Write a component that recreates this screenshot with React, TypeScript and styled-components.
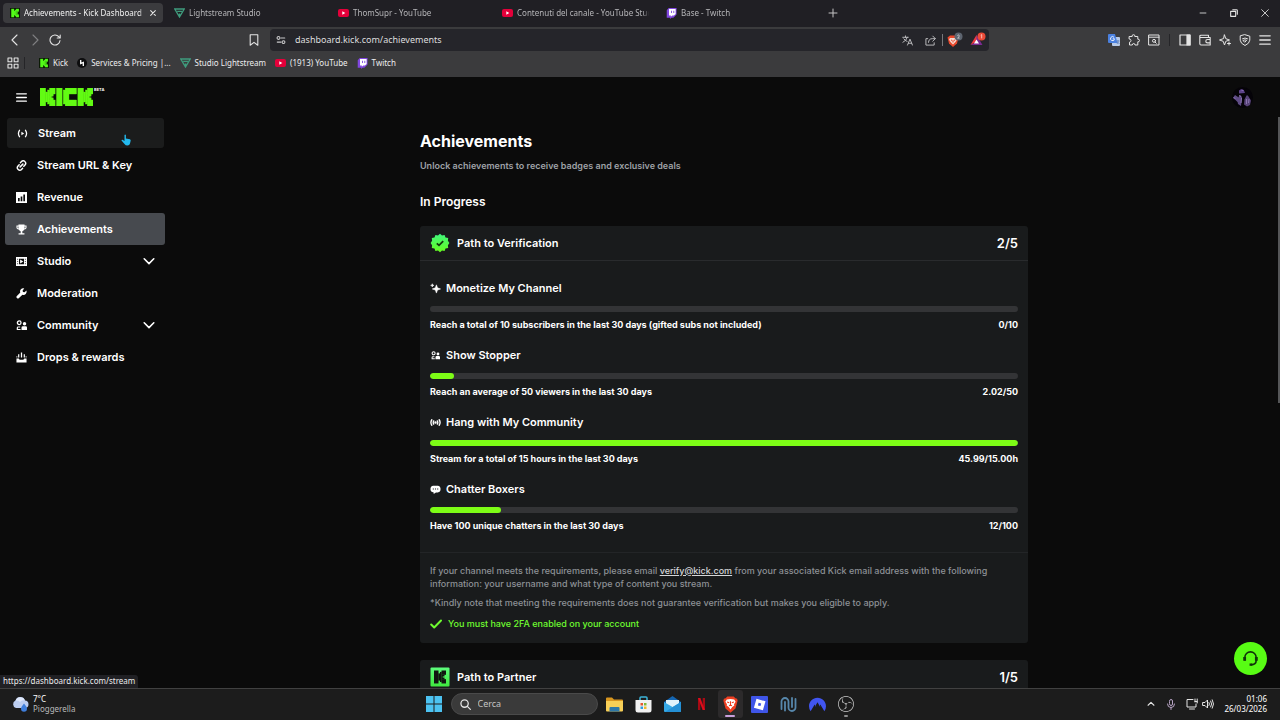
import React from "react";
import styled, { createGlobalStyle, css } from "styled-components";
import { SiNordvpn, SiObsstudio } from "react-icons/si";

const UI = `"Noto Sans", "Open Sans", sans-serif`;
const GREEN = "#7dfc16";

const Global = createGlobalStyle`
  *, *::before, *::after { box-sizing: border-box; }
  body { margin: 0; background: #0b0b0b; color: #fff; font-family: Inter, sans-serif; overflow: hidden; }
  button, input { font: inherit; color: inherit; border: 0; padding: 0; margin: 0; background: none; }
  h1, h2, h3, p, ul { margin: 0; padding: 0; }
  ul { list-style: none; }
  a { color: inherit; text-decoration: none; }
  svg { display: block; flex: none; }
`;

const Screen = styled.div`
  display: flex;
  flex-direction: column;
  height: 100vh;
`;

/* ---------- browser ---------- */

const TabStrip = styled.div`
  display: flex;
  align-items: center;
  height: 27px;
  padding: 0 0 1px 3px;
  background: #201f24;
  font: 8px/12px ${UI};
`;

const Tab = styled.button<{ $active?: boolean }>`
  display: flex;
  align-items: center;
  gap: 4px;
  width: 160px;
  height: 20px;
  margin-right: 4px;
  padding: 0 6px 0 7px;
  border-radius: 4px;
  color: ${(p) => (p.$active ? "#f1f1f1" : "#b5b5b8")};
  background: ${(p) => (p.$active ? "#3b3b3e" : "transparent")};
  text-align: left;
`;

const TabLabel = styled.span`
  flex: 1;
  overflow: hidden;
  white-space: nowrap;
  mask-image: linear-gradient(90deg, #000 calc(100% - 6px), transparent);
`;

const NewTab = styled.button`
  display: grid;
  place-items: center;
  width: 20px;
  height: 20px;
`;

const WindowButtons = styled.div`
  display: flex;
  margin-left: auto;
`;

const WindowButton = styled.button`
  display: grid;
  place-items: center;
  width: 31px;
  height: 26px;
`;

const Toolbar = styled.div`
  display: grid;
  grid-template-columns: 264px 1fr 291px;
  align-items: center;
  height: 26px;
  background: #3b3b3d;
`;

const ToolGroup = styled.div<{ $end?: boolean }>`
  display: flex;
  align-items: center;
  ${(p) =>
    p.$end
      ? css`
          justify-content: flex-end;
          padding-right: 5px;
        `
      : css`
          padding-left: 5px;
        `}
`;

const Tool = styled.button<{ $push?: boolean }>`
  display: grid;
  place-items: center;
  width: 20px;
  height: 20px;
  margin-left: ${(p) => (p.$push ? "auto" : "0")};
`;

const Divider = styled.span<{ $light?: boolean }>`
  width: 1px;
  height: 12px;
  margin: ${(p) => (p.$light ? "0" : "0 5px")};
  background: ${(p) => (p.$light ? "#77777a" : "#252528")};
`;

const Address = styled.div`
  display: flex;
  align-items: center;
  gap: 9px;
  height: 22px;
  margin-left: 6px;
  padding-left: 6px;
  border-radius: 4px;
  background: #25252a;
  font: 9px/14px ${UI};
`;

const AddressInput = styled.input`
  flex: 1;
  min-width: 0;
  color: #dededf;
  outline: 0;
`;

const AddressTools = styled.div`
  display: flex;
  align-items: center;
`;

const AddressTool = styled.button`
  display: grid;
  place-items: center;
  width: 23px;
  height: 20px;
`;

const Bookmarks = styled.nav`
  display: flex;
  align-items: center;
  height: 24px;
  padding: 0 7px 4px;
  background: #3b3b3d;
  color: #ededee;
  font: 8px/12px ${UI};
`;

const BookmarkList = styled.div`
  display: flex;
  align-items: center;
  gap: 9px;
  margin-left: 9px;
`;

const Bookmark = styled.a`
  display: flex;
  align-items: center;
  gap: 4px;
  white-space: nowrap;
`;

/* ---------- page ---------- */

const Page = styled.div`
  position: relative;
  display: flex;
  flex: 1;
  flex-direction: column;
  min-height: 0;
  overflow: hidden;
`;

const PageHeader = styled.header`
  display: flex;
  align-items: center;
  gap: 13px;
  flex: none;
  height: 40px;
  padding: 0 27px 0 16px;
`;

const IconButton = styled.button`
  display: grid;
  place-items: center;
`;

const Brand = styled.a`
  display: flex;
  align-items: flex-start;
  gap: 1px;
`;

const Beta = styled.span`
  font-size: 4px;
  line-height: 4px;
  font-weight: 700;
`;

const AvatarButton = styled.button`
  margin-left: auto;
`;

const Body = styled.div`
  display: flex;
  flex: 1;
  min-height: 0;
`;

const Sidebar = styled.nav`
  flex: none;
  width: 170px;
  padding-left: 5px;
`;

const navRow = css<{ $state?: "hover" | "active" }>`
  display: flex;
  align-items: center;
  gap: 10px;
  width: 160px;
  height: 32px;
  padding: 0 10px 0 11px;
  border-radius: 3px;
  font-size: 11px;
  line-height: 16px;
  font-weight: 600;
  text-align: left;
  ${(p) => p.$state === "active" && "background: #474a4f;"}
  ${(p) =>
    p.$state === "hover" &&
    css`
      width: 157px;
      height: 30px;
      margin: 1px 2px;
      padding: 0 10px;
      background: #1b1c1c;
    `}
`;

const NavLink = styled.a<{ $state?: "hover" | "active" }>`
  ${navRow}
`;

const NavToggle = styled.button<{ $state?: "hover" | "active" }>`
  ${navRow}
`;

const NavLabel = styled.span`
  flex: 1;
`;

const Main = styled.main`
  flex: 1;
  min-width: 0;
  overflow: hidden;
`;

const Content = styled.div`
  max-width: 608px;
  margin: 0 auto;
  padding-top: 12px;
`;

const Title = styled.h1`
  font-size: 16px;
  line-height: 24px;
  font-weight: 700;
`;

const Subtitle = styled.p`
  margin-top: 5px;
  color: #9ea1a6;
  font-size: 9px;
  line-height: 15px;
  font-weight: 600;
`;

const SectionTitle = styled.h2`
  margin: 21px 0 16px;
  font-size: 12px;
  line-height: 16px;
  font-weight: 600;
`;

const Card = styled.section`
  margin-bottom: 17px;
  border-radius: 3px;
  background: #191b1c;
`;

const CardHeader = styled.header`
  display: flex;
  align-items: center;
  gap: 7px;
  height: 35px;
  padding: 0 10px;
  border-bottom: 1px solid #292b2d;
`;

const CardTitle = styled.h3`
  flex: 1;
  font-size: 11px;
  line-height: 16px;
  font-weight: 600;
`;

const CardCount = styled.span`
  font-size: 13px;
  line-height: 16px;
  font-weight: 600;
`;

const Goals = styled.ul`
  display: flex;
  flex-direction: column;
  gap: 15px;
  padding: 19px 10px;
`;

const GoalTitle = styled.div`
  display: flex;
  align-items: center;
  gap: 5px;
  font-size: 11px;
  line-height: 16px;
  font-weight: 600;
`;

const Track = styled.div`
  height: 6px;
  margin: 10px 0 6px;
  overflow: hidden;
  border-radius: 3px;
  background: #333436;
`;

const Fill = styled.div`
  height: 100%;
  border-radius: 3px;
  background: ${GREEN};
`;

const GoalInfo = styled.div`
  display: flex;
  justify-content: space-between;
  font-size: 9px;
  line-height: 14px;
  font-weight: 700;
`;

const Notes = styled.div`
  display: flex;
  flex-direction: column;
  gap: 6px;
  padding: 11px 10px 13px;
  border-top: 1px solid #232527;
  color: #8d9196;
  font-size: 9px;
  line-height: 13px;
  font-weight: 500;
`;

const MailLink = styled.a`
  color: #d5d7d9;
  text-decoration: underline;
`;

const Requirement = styled.p`
  display: flex;
  align-items: center;
  gap: 6px;
  margin-top: 2px;
  color: #6ffb30;
`;

const ScrollTrack = styled.div`
  width: 2px;
`;

const ScrollThumb = styled.div`
  height: 50%;
  background: #555658;
`;

const HelpButton = styled.button`
  position: absolute;
  right: 13px;
  bottom: 13px;
  display: grid;
  place-items: center;
  width: 33px;
  height: 33px;
  border-radius: 50%;
  background: #58fc14;
`;

const StatusBubble = styled.div`
  position: absolute;
  left: 0;
  bottom: 0;
  padding: 0 3px 1px;
  border-radius: 0 3px 0 0;
  background: #202024;
  color: #ececec;
  font: 8px/12px ${UI};
`;

const Pointer = styled.svg`
  position: absolute;
  left: 121px;
  top: 57px;
`;

/* ---------- taskbar ---------- */

const Taskbar = styled.footer`
  display: grid;
  grid-template-columns: 1fr auto 1fr;
  align-items: center;
  flex: none;
  height: 32px;
  padding-bottom: 1px;
  border-top: 1px solid #414141;
  background: #1c1c1c;
  font: 8px/10px ${UI};
`;

const Weather = styled.button`
  display: flex;
  align-items: center;
  justify-self: start;
  gap: 4px;
  padding-left: 12px;
  text-align: left;
`;

const Stack = styled.span<{ $end?: boolean }>`
  display: flex;
  flex-direction: column;
  text-align: ${(p) => (p.$end ? "right" : "left")};
`;

const Dim = styled.span`
  color: #b9b9b9;
`;

const Apps = styled.div`
  display: flex;
  align-items: center;
`;

const AppButton = styled.button<{ $active?: boolean }>`
  position: relative;
  display: grid;
  place-items: center;
  width: 25px;
  height: 28px;
  margin: 0 2px;
  border-radius: 3px;
  background: ${(p) => (p.$active ? "#2c2a2b" : "transparent")};
`;

const RunMark = styled.span<{ $active?: boolean }>`
  position: absolute;
  bottom: 1px;
  width: ${(p) => (p.$active ? "10px" : "4px")};
  height: 2px;
  border-radius: 1px;
  background: ${(p) => (p.$active ? "#c9a0dc" : "#8d8d8d")};
`;

const SearchBox = styled.label`
  display: flex;
  align-items: center;
  gap: 7px;
  width: 147px;
  height: 22px;
  margin: 0 2px;
  padding: 0 8px;
  border: 1px solid #4a4a4a;
  border-radius: 11px;
  background: #3a3a3a;
  font: 9px/14px ${UI};
`;

const SearchInput = styled.input`
  flex: 1;
  min-width: 0;
  outline: 0;
  &::placeholder {
    color: #c4c4c4;
    opacity: 1;
  }
`;

const Tray = styled.div`
  display: flex;
  align-items: center;
  justify-content: flex-end;
  gap: 9px;
  padding-right: 13px;
`;

const TrayPair = styled.button`
  display: flex;
  align-items: center;
  gap: 4px;
`;

const Clock = styled.button`
  margin-left: 1px;
`;

/* ---------- drawings ---------- */

type IconProps = { size?: number; color?: string; width?: number; children: React.ReactNode };

const Line = ({ size = 12, color = "#e4e4e4", width = 1, children }: IconProps) => (
  <svg width={size} height={size} viewBox="0 0 12 12" fill="none" stroke={color} strokeWidth={width} strokeLinecap="round" strokeLinejoin="round" aria-hidden>
    {children}
  </svg>
);

const Solid = ({ size = 11, color = "#fff", children }: IconProps) => (
  <svg width={size} height={size} viewBox="0 0 12 12" fill={color} aria-hidden>
    {children}
  </svg>
);

/* The K mark as blocks on an 8 by 9 grid */
const KBlocks = ({ x = 0 }: { x?: number }) => (
  <g transform={`translate(${x} 0)`}>
    <rect width="3" height="9" />
    <rect x="2.9" y="2" width="1.2" height="5" />
    <rect x="4" y="1" width="1.1" height="7" />
    <rect x="5" width="3" height="3" />
    <rect x="5" y="2.9" width="2" height="1.2" />
    <rect x="5" y="4" width="1" height="1" />
    <rect x="5" y="4.9" width="2" height="1.2" />
    <rect x="5" y="6" width="3" height="3" />
  </g>
);

const KickLogo = () => (
  <svg
    width="53"
    height="18"
    viewBox="0 0 28 9"
    preserveAspectRatio="none"
    fill="#62fb13"
    stroke="#62fb13"
    strokeWidth=".2"
    role="img"
    aria-label="Kick"
  >
    <KBlocks />
    <rect x="8.7" width="3" height="9" />
    <rect x="13.3" width="6" height="3" />
    <rect x="12.3" y="1" width="3" height="7" />
    <rect x="13.3" y="6" width="6" height="3" />
    <KBlocks x={20} />
  </svg>
);

const KickFavicon = () => (
  <svg width="10" height="10" viewBox="0 0 12 12" aria-hidden>
    <rect width="12" height="12" fill="#0b1a05" />
    <g fill="#53fc18" transform="translate(1.5 1) scale(1.15 1.12)">
      <KBlocks />
    </g>
  </svg>
);

const PartnerBadge = () => (
  <svg width="20" height="20" viewBox="0 0 20 20" aria-hidden>
    <defs>
      <linearGradient id="partner" x1="0" y1="0" x2="0" y2="1">
        <stop offset="0" stopColor="#5dfc7c" />
        <stop offset="1" stopColor="#3fe83f" />
      </linearGradient>
    </defs>
    <rect x=".5" y=".5" width="19" height="19" rx="1" fill="url(#partner)" />
    <g fill="#101510" transform="translate(4 3.5) scale(1.5 1.44)">
      <KBlocks />
    </g>
  </svg>
);

const VerifiedBadge = () => (
  <svg width="20" height="20" viewBox="0 0 20 20" aria-hidden>
    <defs>
      <linearGradient id="verified" x1="0" y1="0" x2="0" y2="1">
        <stop offset="0" stopColor="#3ff77f" />
        <stop offset="1" stopColor="#66fb1c" />
      </linearGradient>
    </defs>
    <path
      fill="url(#verified)"
      d="M10 .8l2 1.8 2.6-.7.9 2.5 2.7.7-.3 2.7L19.4 10l-1.5 2.2.3 2.7-2.7.7-.9 2.5-2.6-.7-2 1.8-2-1.8-2.6.7-.9-2.5-2.7-.7.3-2.7L.6 10l1.5-2.2-.3-2.7 2.7-.7.9-2.5 2.6.7z"
    />
    <path d="M6.8 10.3l2.2 2 4.2-4.2" fill="none" stroke="#14380c" strokeWidth="1.8" />
  </svg>
);

const Lightstream = () => (
  <svg width="11" height="10" viewBox="0 0 11 10" fill="none" stroke="#3f9c7d" strokeWidth="1.3" aria-hidden>
    <path d="M.8 1h9.4L5.5 9zM3.2 3.4h4.7M5.5 8.5V5.5" />
  </svg>
);

const YouTube = () => (
  <svg width="11" height="8" viewBox="0 0 11 8" aria-hidden>
    <rect width="11" height="8" rx="2" fill="#e4003a" />
    <path d="M4.3 2.2v3.6L7.3 4z" fill="#fff" />
  </svg>
);

const TwitchMark = () => (
  <svg width="11" height="11" viewBox="0 0 12 12" aria-hidden>
    <path d="M3 0h8.5v7L8 10.5H6L4.5 12v-1.5H.8V2.5z" fill="#8147e0" />
    <path d="M3.3 1h7.2v5.5L8.6 8.2H6.8L5.3 9.6V8.2h-2z" fill="#fff" />
    <path d="M6 3v2.5M8.5 3v2.5" stroke="#8147e0" />
  </svg>
);

const ServicesMark = () => (
  <svg width="10" height="10" viewBox="0 0 10 10" aria-hidden>
    <circle cx="5" cy="5" r="5" fill="#0d0d0e" />
    <path d="M3.7 2v3.5l2.6-1V8" fill="none" stroke="#fff" strokeWidth="1.3" />
  </svg>
);

const BraveLion = ({ size = 12 }: { size?: number }) => (
  <svg width={size} height={size} viewBox="0 0 16 16" aria-hidden>
    <path d="M5 .5h6l1.6 1.7 1.6.3.5 2-.4 1.3-1.6 6L8 15.7l-4.7-3.9-1.6-6-.4-1.3.5-2 1.6-.3z" fill="#ee3f22" />
    <path d="M4.5 3.3L8 2.8l3.5.5 1.3 2.2-1.5 2.3.3 1.2-2 1.3L8 12.8l-1.6-2.5-2-1.3.3-1.2-1.5-2.3z" fill="#fff" />
    <path d="M4.8 5.6l2 .7M11.2 5.6l-2 .7M8 5v3.5M6.6 9.2L8 8.6l1.4.6" stroke="#ee3f22" strokeWidth="1" fill="none" />
  </svg>
);

const Shields = () => (
  <svg width="16" height="16" viewBox="0 0 16 16" aria-hidden>
    <g transform="translate(0 3)">
      <path d="M3 .5h6l2.5 2-1.5 6L6 12 2 8.5.5 2.5z" fill="#e9482c" />
      <path d="M3 3h6l1 1.5L8.5 7 6 9.5 3.5 7 2 4.5z" fill="#f6d9d0" />
      <path d="M4 5l1.5.6M8 5l-1.5.6M6 6v1.5" stroke="#e9482c" />
    </g>
    <circle cx="11.5" cy="4.5" r="4" fill="#5d6470" />
    <path d="M10.4 3.5q1.2-1 1.8 0t-1.6 2.6h2" fill="none" stroke="#d4d7db" strokeWidth=".8" />
  </svg>
);

const Rewards = () => (
  <svg width="16" height="16" viewBox="0 0 16 16" aria-hidden>
    <path d="M6.5 3l6 10h-12l3-1.5z" fill="#7a2a91" />
    <path d="M6.5 3L.5 13l6-3.5z" fill="#ec3a3f" />
    <path d="M6.5 7.5l2.5 4H4z" fill="#fff" />
    <circle cx="11.5" cy="4.5" r="4" fill="#ea4a37" />
    <path d="M10.8 3.2l.9-.6v3.8" fill="none" stroke="#ffd8d0" strokeWidth=".8" />
  </svg>
);

const GoogleTranslate = () => (
  <svg width="12" height="12" viewBox="0 0 12 12" aria-hidden>
    <rect x="4" y="3" width="8" height="9" rx="1" fill="#b9cbe8" />
    <path d="M1 0h6l2.5 9H1a1 1 0 01-1-1V1a1 1 0 011-1z" fill="#4a80df" />
    <path d="M6 3.3a2 2 0 10.5 1.5H4.7" fill="none" stroke="#e9f0fc" />
    <path d="M8.5 7h3M10 6v1q0 2-1 3M9.5 8l2 2" stroke="#5c7eb8" fill="none" strokeWidth=".8" />
  </svg>
);

const Avatar = () => (
  <svg width="21" height="21" viewBox="0 0 21 21" role="img" aria-label="Profile">
    <circle cx="10.5" cy="10.5" r="10.5" fill="#050308" />
    <path d="M7 3.5q3-3 5 0l1 2.5-6 .5z" fill="#5d4389" />
    <path d="M3 8l3 2 .5 6-3-3-2.5-2zM5 12l3-4 2 2-1 9-3-2z" fill="#5f4c85" />
    <path d="M14 9.5l1-1.5 1.5 1.5 2.5 4-1 4.5-3 1.5-3-2 .5-5z" fill="#584479" />
    <path d="M7.5 8l1 2M9.5 11l-.5 5M14.5 12v5M17 12l-.5 4" stroke="#8a74b0" />
    <path d="M9.5 3.5h2M1.5 10.5l2 1" stroke="#8468b4" />
  </svg>
);

const CommunityShapes = () => (
  <>
    <circle cx="3.5" cy="3" r="2" fill="none" stroke="#fff" strokeWidth="1.4" />
    <circle cx="9.3" cy="4" r="1.9" />
    <path d="M.8 11V8.5Q.8 7 2.5 7h2v1.3H2.1V9.7H5V11zM6 11V8.2Q6 6.8 7.5 6.8H10.5Q12 6.8 12 8.2V11z" />
  </>
);

const navIcons = {
  stream: (
    <Line size={11} color="#fff" width={1.4}>
      <path d="M2.7 2.5Q.4 6 2.7 9.5M9.3 2.5Q11.6 6 9.3 9.5" />
      <path d="M4.8 4.1v3.8L7.8 6z" fill="#fff" stroke="none" />
    </Line>
  ),
  link: (
    <Line size={11} color="#fff" width={1.6}>
      <path d="M4.8 2.9l1.2-1.2a2.6 2.6 0 014 .3 2.6 2.6 0 010 3.2L8.5 6.8M7.2 9.1L6 10.3a2.6 2.6 0 01-4-.3 2.6 2.6 0 010-3.2L3.5 5.2M4.5 7.5l3-3" />
    </Line>
  ),
  revenue: (
    <Solid>
      <path fillRule="evenodd" d="M0 0h12v12H0zM2.2 6.5v3.500H4V6.500zM5.100 4.800V10h1.800V4.800zM8 2.800V10h1.800V2.800z" />
    </Solid>
  ),
  trophy: (
    <Solid>
      <path fillRule="evenodd" d="M2.7.5h6.6v1h2.2v2.5q0 1.9-2.4 2Q8.4 7.5 6.9 7.8V10h2.300v1.500H2.800V10h2.300V7.800Q3.600 7.500 2.900 6 .5 5.900.5 4V1.500h2.200zM1.700 2.700V4q0 .7 1 .8V2.700zM9.300 2.700v2.100q1-.1 1-.8V2.700z" />
    </Solid>
  ),
  studio: (
    <Solid>
      <path fillRule="evenodd" d="M0 1.200h12v9.600H0zM3.300 2.900v6.200h5.400V2.900z" />
      <path d="M4.500 3.700v4.600L8 6z" />
      <path d="M1.800 3v6M10.200 3v6" stroke="#0b0b0b" strokeWidth=".8" strokeDasharray="1.2 1.2" />
    </Solid>
  ),
  wrench: (
    <Solid>
      <path d="M11.3 2.800A3.400 3.400 0 017 7.300l-4 4Q2 12 1 11T.7 9l4-4A3.400 3.400 0 019 .5L7.200 2.600l.4 1.800 1.800.3z" />
    </Solid>
  ),
  community: (
    <Solid>
      <CommunityShapes />
    </Solid>
  ),
  drops: (
    <Solid>
      <path d="M5.300.5h1.400v5.500H5.300zM2.300 2.500h1.300v3.500H2.300zM8.400 2.500h1.300v3.500H8.400zM.5 7H3l1 1.500h4L9 7h2.500v4.500H.5z" />
      <path d="M.5 4.500h1v1.500h-1zM10.500 4.500h1v1.500h-1z" />
    </Solid>
  ),
};

const Chevron = () => (
  <Line color="#fff" width={1.6}>
    <path d="M1.200 3.800L6 8.600l4.800-4.800" />
  </Line>
);

const goalIcons = {
  sparkle: (
    <Solid>
      <path
        d="M7 2l1.200 3.300L11.500 6.500 8.200 7.700 7 11 5.800 7.700 2.500 6.500l3.300-1.200zM2.500.8l.5 1.300 1.300.5-1.300.5-.5 1.300L2 3.100.7 2.600 2 2.100z"
        stroke="#fff"
        strokeWidth=".6"
      />
    </Solid>
  ),
  people: (
    <svg width="11" height="9" viewBox="0 0 12 12" fill="#fff" aria-hidden>
      <CommunityShapes />
    </svg>
  ),
  live: (
    <Line size={11} color="#fff" width={1.5}>
      <path d="M2 3Q0 6 2 9M4 4.300Q3 6 4 7.700M10 3q2 3 0 6M8 4.300Q9 6 8 7.700" />
      <circle cx="6" cy="6" r=".6" fill="#fff" />
    </Line>
  ),
  chat: (
    <Solid>
      <path fillRule="evenodd" d="M3.500 1.800h5q3 .3 3 3.700t-3 3.700H6.500L4 11V9.200Q.5 9 .5 5.500t3-3.700zM3 5v1h1.200V5zM5.400 5v1h1.200V5zM7.800 5v1H9V5z" />
    </Solid>
  ),
};

/* ---------- data ---------- */

const tabs = [
  { label: "Achievements - Kick Dashboard", icon: <KickFavicon /> },
  { label: "Lightstream Studio", icon: <Lightstream /> },
  { label: "ThomSupr - YouTube", icon: <YouTube /> },
  { label: "Contenuti del canale - YouTube Studio", icon: <YouTube /> },
  { label: "Base - Twitch", icon: <TwitchMark /> },
];

const bookmarks = [
  { label: "Kick", icon: <KickFavicon /> },
  { label: "Services & Pricing |...", icon: <ServicesMark /> },
  { label: "Studio Lightstream", icon: <Lightstream /> },
  { label: "(1913) YouTube", icon: <YouTube /> },
  { label: "Twitch", icon: <TwitchMark /> },
];

const navItems: { label: string; icon: keyof typeof navIcons; state?: "hover" | "active"; expands?: boolean }[] = [
  { label: "Stream", icon: "stream", state: "hover" },
  { label: "Stream URL & Key", icon: "link" },
  { label: "Revenue", icon: "revenue" },
  { label: "Achievements", icon: "trophy", state: "active" },
  { label: "Studio", icon: "studio", expands: true },
  { label: "Moderation", icon: "wrench" },
  { label: "Community", icon: "community", expands: true },
  { label: "Drops & rewards", icon: "drops" },
];

const goals: { title: string; icon: keyof typeof goalIcons; text: string; value: string; percent: number }[] = [
  { title: "Monetize My Channel", icon: "sparkle", text: "Reach a total of 10 subscribers in the last 30 days (gifted subs not included)", value: "0/10", percent: 0 },
  { title: "Show Stopper", icon: "people", text: "Reach an average of 50 viewers in the last 30 days", value: "2.02/50", percent: 4 },
  { title: "Hang with My Community", icon: "live", text: "Stream for a total of 15 hours in the last 30 days", value: "45.99/15.00h", percent: 100 },
  { title: "Chatter Boxers", icon: "chat", text: "Have 100 unique chatters in the last 30 days", value: "12/100", percent: 12 },
];

/* ---------- sections ---------- */

const Browser = () => (
  <header>
    <TabStrip>
      {tabs.map((tab, i) => (
        <Tab key={tab.label} $active={i === 0}>
          {tab.icon}
          <TabLabel>{tab.label}</TabLabel>
          {i === 0 && (
            <Line size={8} width={1.6}>
              <path d="M2.500 2.500l7 7M9.500 2.500l-7 7" />
            </Line>
          )}
        </Tab>
      ))}
      <NewTab aria-label="New tab">
        <Line color="#c4c4c4">
          <path d="M6 2v8M2 6h8" />
        </Line>
      </NewTab>
      <WindowButtons>
        <WindowButton aria-label="Minimize">
          <Line size={10}>
            <path d="M2.500 6h7" />
          </Line>
        </WindowButton>
        <WindowButton aria-label="Restore">
          <Line size={10} width={1.3}>
            <path d="M2 4h6v6H2zM4.500 2h4.500q1 0 1 1v4.500" />
          </Line>
        </WindowButton>
        <WindowButton aria-label="Close">
          <Line size={10}>
            <path d="M2 2l8 8M10 2l-8 8" />
          </Line>
        </WindowButton>
      </WindowButtons>
    </TabStrip>
    <Toolbar>
      <ToolGroup>
        <Tool aria-label="Back">
          <Line width={1.1}>
            <path d="M8 1L3 6l5 5" />
          </Line>
        </Tool>
        <Tool aria-label="Forward">
          <Line color="#808083" width={1.1}>
            <path d="M4 1l5 5-5 5" />
          </Line>
        </Tool>
        <Tool aria-label="Reload">
          <Line width={1.1}>
            <path d="M11 6.500a5 5 0 11-1.200-3.800L11 4M11.200 1v3H8.200" />
          </Line>
        </Tool>
        <Tool $push aria-label="Bookmark this page">
          <Line width={1.1}>
            <path d="M2.200.8h7.600v10.400L6 8.400l-3.800 2.800z" />
          </Line>
        </Tool>
      </ToolGroup>
      <Address>
        <Line size={10} color="#c9c9cb" width={1.3}>
          <circle cx="3" cy="3.5" r="1.7" />
          <path d="M6 3.500h4.500M1.500 8.500H6" />
          <circle cx="9" cy="8.5" r="1.7" />
        </Line>
        <AddressInput aria-label="Address" defaultValue="dashboard.kick.com/achievements" />
        <AddressTools>
          <AddressTool aria-label="Translate">
            <Line size={11} color="#c5c5c7">
              <path d="M.8 2.500h6M3.800 1v1.500M5.800 2.500Q5 6 1 8M2 4.200Q3.500 6.500 5.500 7M6 11l2.700-6.500L11.400 11M7 9h3.400" />
            </Line>
          </AddressTool>
          <AddressTool aria-label="Share">
            <Line size={11} color="#c5c5c7">
              <path d="M3 4H1v7h9V8.500M3.800 8Q4 4 8 4h3M8.500 1.200L11.300 4 8.500 6.700" />
            </Line>
          </AddressTool>
          <Divider $light />
          <AddressTool aria-label="Shields">
            <Shields />
          </AddressTool>
          <AddressTool aria-label="Rewards">
            <Rewards />
          </AddressTool>
        </AddressTools>
      </Address>
      <ToolGroup $end>
        <Tool aria-label="Google Translate">
          <GoogleTranslate />
        </Tool>
        <Tool aria-label="Extensions">
          <Line>
            <path d="M1.500 2.500h2.700q-.5-1.800 1.300-1.800t1.300 1.800h3V5.200q1.700-.3 1.700 1.300T9.800 7.800V11H7Q7 9.500 5.700 9.500T4.300 11H1.500V8.200q1.500-.2 1.500-1.700T1.500 5z" />
          </Line>
        </Tool>
        <Tool aria-label="Search tabs">
          <Line>
            <path d="M1 1h10v10H1zM1 3.200h10M7 8l1.300 1.300" />
            <circle cx="6" cy="6.8" r="1.5" />
          </Line>
        </Tool>
        <Divider />
        <Tool aria-label="Sidebar">
          <Line width={1.2}>
            <path d="M1 1h10v10H1z" />
            <path d="M8 1h3v10H8z" fill="#e4e4e4" />
          </Line>
        </Tool>
        <Tool aria-label="Wallet">
          <Line width={1.1}>
            <path d="M9.500 3.500V1.200H2Q.8 1.200.8 2.400v7.400Q.8 11 2 11h9.200V3.500H1.500M11.200 5.500H8.500a1.700 1.700 0 000 3.400h2.700" />
          </Line>
        </Tool>
        <Tool aria-label="Leo AI">
          <Line>
            <path d="M5.500 1l1.300 3.700L10.500 6 6.800 7.300 5.500 11 4.200 7.300.5 6l3.700-1.300zM10 8v3M8.500 9.500h3" />
          </Line>
        </Tool>
        <Tool aria-label="VPN">
          <Line>
            <path d="M6 .7l4.800 1.500v4Q10.500 9.500 6 11.500 1.500 9.500 1.200 6.200v-4zM3.500 4.700q2.500-1.500 5 0M4.300 6.300q1.700-1 3.400 0L6 8z" />
          </Line>
        </Tool>
        <Tool aria-label="Menu">
          <Line width={1.3}>
            <path d="M.8 1.800h10.400M.8 6h10.400M.8 10.200h10.400" />
          </Line>
        </Tool>
      </ToolGroup>
    </Toolbar>
    <Bookmarks aria-label="Bookmarks">
      <Line width={1.1}>
        <path d="M1 1h3.800v3.800H1zM7.200 1H11v3.800H7.200zM1 7.200h3.800V11H1zM7.200 7.200H11V11H7.200z" />
      </Line>
      <Divider />
      <BookmarkList>
        {bookmarks.map((b) => (
          <Bookmark key={b.label} href="#">
            {b.icon}
            {b.label}
          </Bookmark>
        ))}
      </BookmarkList>
    </Bookmarks>
  </header>
);

const SideNav = () => (
  <Sidebar aria-label="Dashboard">
    {navItems.map((item) =>
      item.expands ? (
        <NavToggle key={item.label} aria-expanded={false}>
          {navIcons[item.icon]}
          <NavLabel>{item.label}</NavLabel>
          <Chevron />
        </NavToggle>
      ) : (
        <NavLink key={item.label} href="#" $state={item.state}>
          {navIcons[item.icon]}
          <NavLabel>{item.label}</NavLabel>
        </NavLink>
      )
    )}
  </Sidebar>
);

const Achievements = () => (
  <Main>
    <Content>
      <Title>Achievements</Title>
      <Subtitle>Unlock achievements to receive badges and exclusive deals</Subtitle>
      <SectionTitle>In Progress</SectionTitle>
      <Card>
        <CardHeader>
          <VerifiedBadge />
          <CardTitle>Path to Verification</CardTitle>
          <CardCount>2/5</CardCount>
        </CardHeader>
        <Goals>
          {goals.map((g) => (
            <li key={g.title}>
              <GoalTitle>
                {goalIcons[g.icon]}
                {g.title}
              </GoalTitle>
              <Track role="progressbar" aria-label={g.title} aria-valuenow={g.percent}>
                <Fill style={{ width: `${g.percent}%` }} />
              </Track>
              <GoalInfo>
                <span>{g.text}</span>
                <span>{g.value}</span>
              </GoalInfo>
            </li>
          ))}
        </Goals>
        <Notes>
          <p>
            If your channel meets the requirements, please email <MailLink href="mailto:verify@kick.com">verify@kick.com</MailLink> from your
            associated Kick email address with the following information: your username and what type of content you stream.
          </p>
          <p>*Kindly note that meeting the requirements does not guarantee verification but makes you eligible to apply.</p>
          <Requirement>
            <Line color="#6ffb30" width={2}>
              <path d="M1.200 6.500l3 3L11 2.500" />
            </Line>
            You must have 2FA enabled on your account
          </Requirement>
        </Notes>
      </Card>
      <Card>
        <CardHeader>
          <PartnerBadge />
          <CardTitle>Path to Partner</CardTitle>
          <CardCount>1/5</CardCount>
        </CardHeader>
      </Card>
    </Content>
  </Main>
);

const Desktop = () => (
  <Taskbar>
    <Weather>
      <svg width="17" height="16" viewBox="0 0 17 16" aria-hidden>
        <path d="M4 12a4 4 0 01-.5-7.500A5 5 0 0113 4.500a3.800 3.800 0 01.5 7.500z" fill="#bccdf0" />
        <path d="M3.500 4.700A5 5 0 0113 4.500q-3-1-5 1.500-2-2-4.500-1.300z" fill="#dde7fb" />
        <path d="M12 7.500q3 3.600 3 5.200a3 3 0 01-6 0q0-1.600 3-5.200z" fill="#3f7edb" />
      </svg>
      <Stack>
        <span>7°C</span>
        <Dim>Pioggerella</Dim>
      </Stack>
    </Weather>
    <Apps>
      <AppButton aria-label="Start">
        <svg width="16" height="16" viewBox="0 0 16 16" fill="#4cc2f1" aria-hidden>
          <path d="M0 0h7.500v7.500H0zM8.500 0H16v7.500H8.500zM0 8.500h7.500V16H0zM8.500 8.500H16V16H8.500z" />
        </svg>
      </AppButton>
      <SearchBox>
        <Line size={11} width={1.4}>
          <circle cx="5" cy="5" r="4" />
          <path d="M8 8l3.300 3.300" />
        </Line>
        <SearchInput aria-label="Cerca" placeholder="Cerca" />
      </SearchBox>
      <AppButton aria-label="Esplora file">
        <svg width="17" height="15" viewBox="0 0 17 15" aria-hidden>
          <path d="M0 1.500Q0 .5 1 .5h5l2 2h8q1 0 1 1V8H0z" fill="#d9961f" />
          <path d="M0 4h17v9.500q0 1-1 1H1q-1 0-1-1z" fill="#f7cf57" />
          <path d="M3.500 14.500V11q0-1 1-1h8q1 0 1 1v3.500z" fill="#2f78a8" />
        </svg>
      </AppButton>
      <AppButton aria-label="Microsoft Store">
        <svg width="17" height="17" viewBox="0 0 17 17" aria-hidden>
          <path d="M5 5V2q0-1 1-1h5q1 0 1 1v3" fill="none" stroke="#3cb4d8" strokeWidth="1.5" />
          <path d="M.5 4h16v10q0 2.500-2.500 2.500H3Q.5 16.500.5 14z" fill="#f1f1f1" />
          <path d="M5.500 7h2.500v2.500H5.500z" fill="#e4572e" />
          <path d="M9 7h2.500v2.500H9z" fill="#7fba3a" />
          <path d="M5.500 10.500h2.500V13H5.500z" fill="#2f9fe0" />
          <path d="M9 10.500h2.500V13H9z" fill="#f2b92c" />
        </svg>
      </AppButton>
      <AppButton aria-label="Posta">
        <svg width="17" height="16" viewBox="0 0 17 16" aria-hidden>
          <path d="M0 6l8.500-6L17 6v8H0z" fill="#1565b0" />
          <path d="M2 4h13v8H2z" fill="#dff2fb" />
          <path d="M0 6l8.500 5L17 6v9q0 1-1 1H1q-1 0-1-1z" fill="#36a9e6" />
          <path d="M17 6v9q0 1-1 1H1z" fill="#2490d5" />
        </svg>
      </AppButton>
      <AppButton aria-label="Netflix">
        <svg width="7" height="12" viewBox="0 0 7 12" aria-hidden>
          <rect width="2.3" height="12" fill="#a60a14" />
          <rect x="4.7" width="2.3" height="12" fill="#a60a14" />
          <path d="M0 0h2.300L7 12H4.700z" fill="#dc0d1b" />
        </svg>
      </AppButton>
      <AppButton $active aria-label="Brave">
        <BraveLion size={17} />
        <RunMark $active />
      </AppButton>
      <AppButton aria-label="Roblox">
        <svg width="17" height="17" viewBox="0 0 17 17" aria-hidden>
          <rect width="17" height="17" rx="1" fill="#3f55e8" />
          <path fillRule="evenodd" d="M5.500 2.800l9 2.500-2.600 9-9-2.600zM7.600 6.800L6.900 9.400l2.600.7.700-2.600z" fill="#fff" />
        </svg>
      </AppButton>
      <AppButton aria-label="Audio">
        <svg width="17" height="17" viewBox="0 0 17 17" fill="none" stroke="#5787ab" strokeWidth="1.8" strokeLinecap="round" aria-hidden>
          <path d="M1.500 13V5.500a3.500 3.500 0 017 0v6a3.500 3.500 0 007 0V3M5 14.500V6M12 2v9" />
        </svg>
      </AppButton>
      <AppButton aria-label="NordVPN">
        <SiNordvpn size={17} color="#4155f0" />
      </AppButton>
      <AppButton aria-label="OBS Studio">
        <SiObsstudio size={16} color="#c9c9c9" />
        <RunMark />
      </AppButton>
    </Apps>
    <Tray>
      <IconButton aria-label="Mostra icone nascoste">
        <Line size={10} width={1.3}>
          <path d="M2.500 7.500L6 4l3.500 3.500" />
        </Line>
      </IconButton>
      <IconButton aria-label="Microfono">
        <Line color="#b9a5c6">
          <path d="M4.500 3a1.500 1.500 0 013 0v3a1.500 1.500 0 01-3 0zM2.500 6a3.500 3.500 0 007 0M6 9.500v2" />
        </Line>
      </IconButton>
      <TrayPair aria-label="Rete e volume">
        <Line>
          <path d="M7 1.500H1v7.500h9V6M3.500 11h5M9 1v3M11.200 1v3M9 3.500h2.200v1.500" />
        </Line>
        <Line>
          <path d="M1 4.500h2L5.500 2v8L3 7.500H1zM7 4.500q1 1.500 0 3M8.700 3q2 3 0 6M10.300 1.800q2.600 4.200 0 8.400" />
        </Line>
      </TrayPair>
      <Clock>
        <Stack $end>
          <span>01:06</span>
          <span>26/03/2026</span>
        </Stack>
      </Clock>
    </Tray>
  </Taskbar>
);

export default function App() {
  return (
    <Screen>
      <Global />
      <Browser />
      <Page>
        <PageHeader>
          <IconButton aria-label="Toggle menu">
            <Line size={11} color="#fff" width={1.4}>
              <path d="M.7 2h10.600M.7 6h10.600M.7 10h10.600" />
            </Line>
          </IconButton>
          <Brand href="#">
            <KickLogo />
            <Beta>BETA</Beta>
          </Brand>
          <AvatarButton>
            <Avatar />
          </AvatarButton>
        </PageHeader>
        <Body>
          <SideNav />
          <Achievements />
          <ScrollTrack>
            <ScrollThumb />
          </ScrollTrack>
        </Body>
        <Pointer width="11" height="12" viewBox="0 0 11 12" fill="#23b9ee" aria-hidden>
          <path d="M3.500 1q.7-1 1.400 0v3.500l4 .8q.8.300.8 1.200L9 9.500Q8.500 11.500 6.500 11.500q-2 0-3-1.500L.5 6.500q0-1 1-.7l2 1.200z" />
        </Pointer>
        <HelpButton aria-label="Help">
          <svg width="17" height="17" viewBox="0 0 18 18" fill="none" stroke="#10340a" strokeWidth="1.7" aria-hidden>
            <path d="M3 11V8a6 6 0 0112 0v3q0 4.500-5.500 4.500" />
            <path d="M2.800 7.500v4M15.200 7.500v4" strokeWidth="3" />
            <path d="M8 15.500h3" strokeWidth="2.5" />
          </svg>
        </HelpButton>
        <StatusBubble>https://dashboard.kick.com/stream</StatusBubble>
      </Page>
      <Desktop />
    </Screen>
  );
}
